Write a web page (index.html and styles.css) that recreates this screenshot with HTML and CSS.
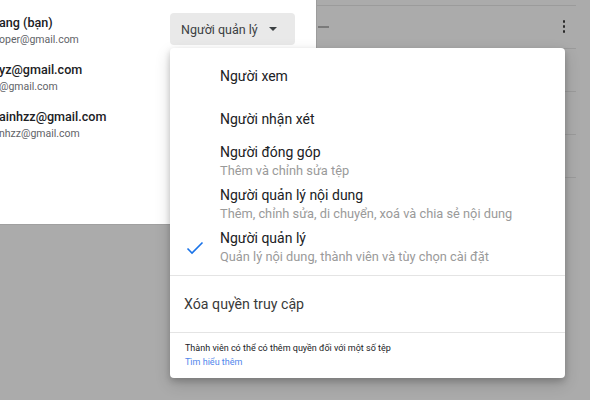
FILE: index.html
```html
<!DOCTYPE html>
<html lang="vi">
<head>
<meta charset="utf-8">
<title>Chia sẻ</title>
<link rel="stylesheet" href="styles.css">
</head>
<body>
<div class="page">
  <section class="dialog">
    <div class="member member-first">
      <div class="who">
        <div class="name">ang (bạn)</div>
        <div class="email">oper@gmail.com</div>
      </div>
      <button class="role-btn">Người quản lý <span class="caret"></span></button>
    </div>
    <div class="member">
      <div class="who">
        <div class="name">yz@gmail.com</div>
        <div class="email">@gmail.com</div>
      </div>
    </div>
    <div class="member">
      <div class="who">
        <div class="name">ainhzz@gmail.com</div>
        <div class="email">nhzz@gmail.com</div>
      </div>
    </div>
  </section>
  <section class="table">
    <div class="row">
      <span class="dash"></span>
      <span class="kebab"><i></i><i></i><i></i></span>
    </div>
    <div class="row"></div>
    <div class="row"></div>
    <div class="row"></div>
    <div class="row"></div>
  </section>
</div>

<div class="menu">
  <ul class="roles">
    <li class="item"><span class="gutter"></span><div class="text"><div class="title">Người xem</div></div></li>
    <li class="item"><span class="gutter"></span><div class="text"><div class="title">Người nhận xét</div></div></li>
    <li class="item"><span class="gutter"></span><div class="text"><div class="title">Người đóng góp</div><div class="sub">Thêm và chỉnh sửa tệp</div></div></li>
    <li class="item"><span class="gutter"></span><div class="text"><div class="title">Người quản lý nội dung</div><div class="sub">Thêm, chỉnh sửa, di chuyển, xoá và chia sẻ nội dung</div></div></li>
    <li class="item selected"><span class="gutter"><svg class="check" width="20" height="20" viewBox="0 0 20 20"><polyline points="2.5,10.5 7,15 17.5,4.5" fill="none" stroke="#1a73e8" stroke-width="1.6"/></svg></span><div class="text"><div class="title">Người quản lý</div><div class="sub">Quản lý nội dung, thành viên và tùy chọn cài đặt</div></div></li>
  </ul>
  <div class="remove">Xóa quyền truy cập</div>
  <div class="note">
    <div>Thành viên có thể có thêm quyền đối với một số tệp</div>
    <a class="link" href="#">Tìm hiểu thêm</a>
  </div>
</div>
</body>
</html>
```

FILE: styles.css
```css
* { box-sizing: border-box; }
html, body { margin: 0; padding: 0; }
body {
  width: 590px;
  height: 400px;
  overflow: hidden;
  background: #ababab;
  font-family: Roboto, "Noto Sans", Arial, sans-serif;
  position: relative;
}
.page {
  display: flex;
  align-items: flex-start;
  height: 400px;
}
.dialog {
  width: 317px;
  height: 225px;
  background: #fff;
  border-right: 1px solid #9c9c9c;
  border-bottom: 1px solid #a0a0a0;
  padding-top: 14px;
  display: flex;
  flex-direction: column;
  gap: 13px;
  overflow: hidden;
}
.member {
  display: flex;
  align-items: center;
  justify-content: space-between;
}
.who { margin-left: -1px; }
.name {
  font-size: 12.6px;
  line-height: 18px;
  font-weight: 500;
  color: #202124;
}
.email {
  font-size: 10.5px;
  line-height: 16px;
  color: #5f6368;
}
.role-btn {
  margin-right: 21px;
  margin-top: -4px;
  width: 125px;
  height: 32px;
  border: none;
  border-radius: 4px;
  background: #e9e9e9;
  font-family: Roboto, "Noto Sans", Arial, sans-serif;
  font-size: 12.5px;
  color: #3c4043;
  text-align: left;
  padding: 0 0 0 11px;
  display: flex;
  align-items: center;
}
.caret {
  display: inline-block;
  margin-left: 11px;
  width: 0; height: 0;
  border-left: 4.5px solid transparent;
  border-right: 4.5px solid transparent;
  border-top: 4.5px solid #3c4043;
}
.table {
  flex: 1;
  margin-right: 14px;
  padding-top: 5px;
}
.row {
  height: 43px;
  border-top: 1px solid #9b9b9b;
  display: flex;
  align-items: center;
  justify-content: space-between;
  padding: 0 11px 0 1px;
}
.dash {
  width: 11px;
  height: 2px;
  background: #7a7a7a;
  margin-top: -1px;
}
.kebab {
  display: flex;
  flex-direction: column;
  gap: 2.5px;
  margin-top: -1px;
}
.kebab i {
  display: block;
  width: 2.4px;
  height: 2.4px;
  border-radius: 50%;
  background: #2a2a2a;
}
.menu {
  position: absolute;
  left: 170px;
  top: 48px;
  width: 395px;
  height: 330px;
  background: #fff;
  border-radius: 4px;
  box-shadow: 0 3px 6px rgba(0,0,0,0.18), 0 6px 16px rgba(0,0,0,0.16);
  display: flex;
  flex-direction: column;
}
.roles {
  list-style: none;
  margin: 0;
  padding: 6px 0;
  border-bottom: 1px solid #e4e4e4;
}
.item {
  height: 43px;
  display: flex;
  align-items: center;
}
.gutter {
  width: 50px;
  flex: none;
  display: flex;
  align-items: center;
  padding-left: 15px;
}
.check { display: block; margin-top: 1px; }
.title {
  font-size: 14px;
  line-height: 18px;
  color: #202124;
}
.sub {
  font-size: 12.8px;
  line-height: 20px;
  color: #9a9a9a;
}
.remove {
  height: 57px;
  border-bottom: 1px solid #e4e4e4;
  padding-left: 14px;
  display: flex;
  align-items: center;
  font-size: 14.2px;
  color: #3a3a3a;
}
.note {
  padding: 8px 0 0 15px;
  font-size: 9px;
  line-height: 14px;
  color: #202124;
}
.link {
  color: #4f86ec;
  text-decoration: none;
}
```
